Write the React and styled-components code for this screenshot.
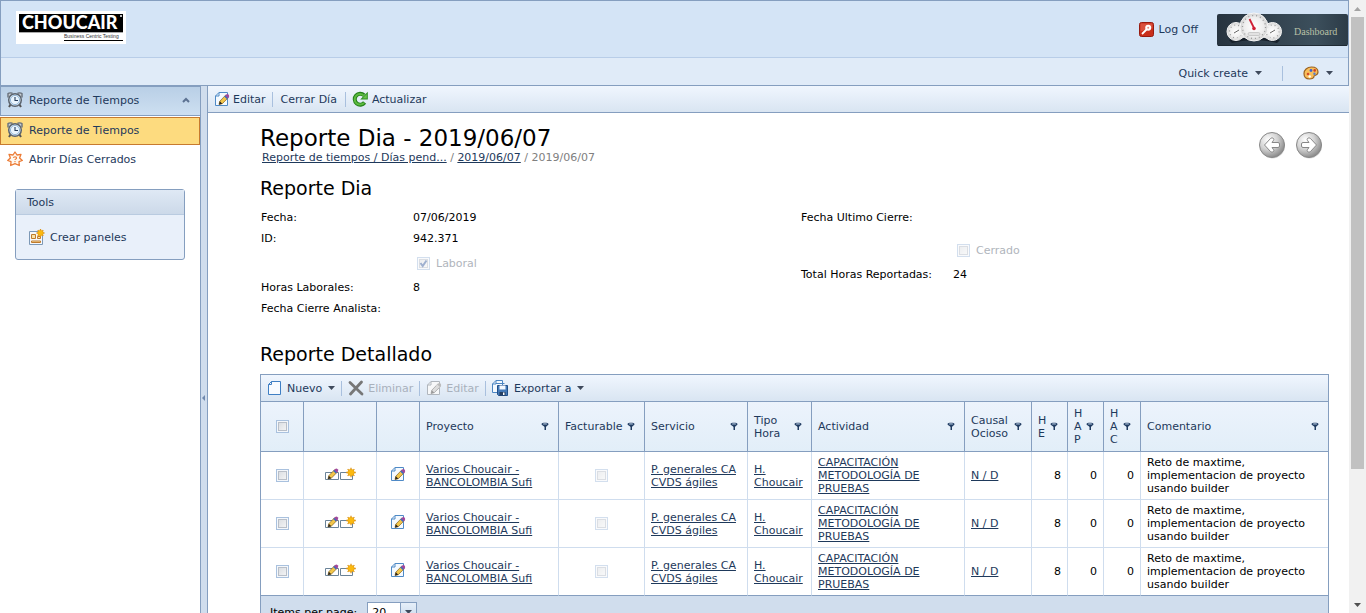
import React from "react";
import styled, { createGlobalStyle, css } from "styled-components";

const line = "#859ebf";
const soft = "#cfddee";
const ink = "#1e395b";

const GlobalStyle = createGlobalStyle`
  * { box-sizing: border-box; }
  body { margin: 0; background: #fff; color: #000; font: 11px/13px "DejaVu Sans", Verdana, sans-serif; }
  button, input, select { font: inherit; color: inherit; }
  h1, h2, p { margin: 0; font-weight: 400; }
  a { color: ${ink}; }
  svg { display: block; flex: none; }
`;

/* ---------- frame ---------- */
const Frame = styled.div`
  display: flex;
  height: 100vh;
`;
const Page = styled.div`
  flex: 1;
  min-width: 0;
  display: flex;
  flex-direction: column;
  overflow-y: auto;
  scrollbar-width: none;
`;
const ScrollRail = styled.div`
  width: 17px;
  flex: none;
  display: flex;
  flex-direction: column;
  align-items: center;
  background: #f1f1f1;
`;
const RailEnd = styled.div`
  height: 17px;
  display: flex;
  align-items: center;
`;
const RailTrack = styled.div`
  flex: 1;
  width: 13px;
`;
const RailThumb = styled.div`
  height: 78%;
  background: #c1c1c1;
`;

/* ---------- header ---------- */
const Header = styled.header`
  flex: none;
  border: 1px solid ${line};
  color: ${ink};
`;
const Brand = styled.div`
  height: 57px;
  display: flex;
  align-items: center;
  justify-content: space-between;
  padding: 0 0 3px 15px;
  background: #d4e4f6;
  border-bottom: 1px solid #b8cde8;
`;
const BrandRight = styled.div`
  display: flex;
  align-items: center;
  gap: 19px;
  padding-top: 3px;
`;
const SubBar = styled.div`
  height: 27px;
  display: flex;
  align-items: center;
  justify-content: flex-end;
  padding: 3px 15px 0 0;
  gap: 20px;
  background: #e0ebf8;
`;
const Bar = styled.span`
  width: 1px;
  height: 15px;
  background: #a9c0de;
`;
const PlainButton = styled.button`
  display: flex;
  align-items: center;
  gap: ${(p) => p.$gap ?? 4}px;
  padding: 0 ${(p) => p.$pad ?? 0}px;
  border: 0;
  background: none;
  color: ${ink};
  white-space: nowrap;
  &:disabled { color: #a9b1bc; }
`;
const Dash = styled.button`
  display: block;
  padding: 0;
  border: 0;
  background: none;
`;

/* ---------- body ---------- */
const Body = styled.div`
  flex: 1 0 auto;
  display: flex;
`;
const Sidebar = styled.aside`
  width: 200px;
  flex: none;
  color: ${ink};
`;
const GroupHead = styled.button`
  display: flex;
  align-items: center;
  gap: 6px;
  width: 100%;
  height: 30px;
  padding: 0 10px 2px 6px;
  border: 1px solid ${line};
  border-right: 0;
  background: linear-gradient(#b9cfe6, #cddff1);
  color: ${ink};
  text-align: left;
  & > span { flex: 1; }
`;
const NavLink = styled.a`
  display: flex;
  align-items: center;
  gap: 6px;
  height: 28px;
  padding: 0 6px;
  border: 1px solid transparent;
  color: ${ink};
  text-decoration: none;
  ${(p) => p.$active && css`
    margin-top: 1px;
    padding-bottom: 2px;
    border-color: #c77a2e;
    background: #fddb7f;
  `}
`;
const Tools = styled.section`
  margin: 16px 15px;
  border: 1px solid ${line};
  border-radius: 3px;
  background: #e9f0fa;
`;
const ToolsHead = styled.h2`
  padding: 6px 11px 5px;
  font-size: 11px;
  line-height: 13px;
  border-bottom: 1px solid #b9cbe0;
  background: linear-gradient(#dfe9f5, #ccd9e9);
`;
const ToolsBody = styled.div`
  padding: 14px 13px;
`;
const Splitter = styled.div`
  width: 8px;
  flex: none;
  padding-top: 50vh;
  border: solid ${line};
  border-width: 0 1px;
  background: #d0dded;
`;
const Main = styled.main`
  flex: 1;
  min-width: 0;
`;
const Toolbar = styled.div`
  display: flex;
  align-items: center;
  gap: 6px;
  height: 27px;
  padding: 0 6px;
  border-bottom: 1px solid ${line};
  background: linear-gradient(#f0f6fe, #d9e5f2);
`;
const Content = styled.div`
  padding: 12px 20px 20px 52px;
`;
const TitleRow = styled.div`
  display: flex;
  justify-content: space-between;
  align-items: center;
`;
const Title = styled.h1`
  font-size: 23px;
  line-height: 26px;
`;
const Crumbs = styled.nav`
  padding-left: 2px;
  line-height: 14px;
  color: #808080;
`;
const Pager = styled.div`
  display: flex;
  gap: 9px;
  padding-right: 6px;
`;
const Section = styled.h2`
  margin: ${(p) => (p.$spaced ? "23px 0 8px" : "11px 0 7px")};
  font-size: 19px;
  line-height: 24px;
`;
const Form = styled.div`
  display: grid;
  grid-template-columns: 1fr 1fr;
  gap: 12px;
  padding-left: 1px;
`;
const Field = styled.div`
  display: flex;
  align-items: center;
  height: 21px;
  margin-bottom: ${(p) => (p.$loose ? 8 : 0)}px;
`;
const FieldLabel = styled.span`
  width: 152px;
  flex: none;
`;
const CheckField = styled.label`
  display: flex;
  align-items: center;
  gap: 6px;
  height: 28px;
  padding-left: 156px;
  color: #b0b5bc;
`;
const Check = styled.input.attrs({ type: "checkbox" })`
  appearance: none;
  width: 13px;
  height: 13px;
  margin: 0;
  flex: none;
  vertical-align: middle;
  border: 1px solid #a9c1de;
  background: linear-gradient(135deg, #dcdfe3, #f2f3f4) content-box, #f4f7fb;
  padding: 2px;
  box-shadow: inset 0 0 0 1px #f4f7fb, inset 0 0 0 2px #b9bfc8;
  opacity: ${(p) => (p.disabled ? 0.5 : 1)};
`;
const CheckSlot = styled.span`
  display: grid;
  & > * { grid-area: 1 / 1; }
  & > svg { z-index: 1; }
`;

/* ---------- grid ---------- */
const GridBox = styled.section`
  border: 1px solid ${line};
`;
const Table = styled.table`
  width: 100%;
  table-layout: fixed;
  border-collapse: separate;
  border-spacing: 0;
`;
const Th = styled.th`
  height: 50px;
  padding: 0 6px;
  font-weight: 400;
  text-align: left;
  color: ${ink};
  border-bottom: 1px solid ${line};
  border-right: 1px solid ${line};
  background: linear-gradient(#ecf3fc, #e2eef8);
  &:last-child { border-right: 0; }
`;
const HeadCell = styled.div`
  display: flex;
  align-items: center;
  justify-content: space-between;
  padding-right: 3px;
  gap: 2px;
  & > span { ${(p) => p.$narrow && "width: 10px; word-break: break-all;"} }
`;
const Td = styled.td`
  height: 48px;
  padding: 4px 6px;
  text-align: ${(p) => p.$align || "left"};
  border-right: 1px solid ${soft};
  border-bottom: 1px solid ${soft};
  &:last-child { border-right: 0; padding-right: 14px; }
  tr:last-child > & { border-bottom-color: ${line}; }
`;
const Icons = styled.div`
  display: flex;
  justify-content: center;
`;
const RowIcons = styled(Icons)`
  padding-bottom: 3px;
`;
const IconButton = styled.button`
  padding: 0;
  border: 0;
  background: none;
`;
const GridFoot = styled.div`
  display: flex;
  align-items: center;
  gap: 10px;
  padding: 6px 9px;
  background: #d0dded;
`;
const SelectBox = styled.span`
  display: inline-grid;
  grid-template-columns: 1fr 16px;
  align-items: center;
  width: 50px;
  height: 20px;
  border: 1px solid ${line};
  background: #fff;
`;
const Select = styled.select`
  grid-area: 1 / 1 / 2 / 3;
  appearance: none;
  height: 18px;
  padding: 0 4px;
  border: 0;
  background: transparent;
  color: #000;
`;
const SelectArrow = styled.span`
  grid-area: 1 / 2;
  height: 18px;
  display: grid;
  place-items: center;
  border-left: 1px solid ${line};
  background: linear-gradient(#e6eff9, #c6d7ea);
  pointer-events: none;
`;

/* ---------- icons ---------- */
const Arrow = ({ color = "#3f4a5c" }) => (
  <svg width="7" height="4" viewBox="0 0 7 4"><path d="M0 0h7L3.5 4z" fill={color} /></svg>
);
const RailArrow = ({ up }) => (
  <svg width="7" height="4" viewBox="0 0 7 4">
    <path d={up ? "M0 4h7L3.5 0z" : "M0 0h7L3.5 4z"} fill={up ? "#a3a3a3" : "#505050"} />
  </svg>
);
const Chevron = () => (
  <svg width="8" height="6" viewBox="0 0 8 6"><path d="M1 5l3-3 3 3" fill="none" stroke="#5c7292" strokeWidth="2" /></svg>
);
const Pin = () => (
  <svg width="8" height="10" viewBox="0 0 8 10">
    <path d="M.5 2C.5 .3 7.500 .3 7.500 2 7.500 3.500 5.500 3.700 5 5V8H3.500V5C3 3.700 .5 3.500 .5 2z" fill="#1f3a60" />
    <ellipse cx="4" cy="1.900" rx="2.300" ry=".7" fill="#a8bdd6" />
  </svg>
);
const Clock = () => (
  <svg width="16" height="16" viewBox="0 0 16 16">
    <path d="M3.500 12.500l-1.500 2.500M12.500 12.500l1.500 2.500" stroke="#555" strokeWidth="2" />
    <path d="M1 5.500V1.500Q2.500 .5 5.500 1.200M15 5.500V1.500Q13.500 .5 10.500 1.200" fill="#c9cfd5" stroke="#68707a" strokeWidth="1.400" />
    <circle cx="8" cy="8" r="6.300" fill="#dcebf7" stroke="#5b636d" strokeWidth="1.500" />
    <circle cx="8" cy="8" r="4.600" fill="#e9f4fd" stroke="#92b5d6" />
    <path d="M8 5v3.500h3" fill="none" stroke="#263c59" strokeWidth="1.100" />
  </svg>
);
const Gear = () => (
  <svg width="16" height="16" viewBox="0 0 16 16">
    <path d="M8 1L10 4L14 3.300L12.600 7L15.300 9.500L12 10.700L12.300 14.500L8 12.700L3.700 14.500L4 10.700L.7 9.500L3.400 7L2 3.300L6 4z" fill="#fff8f0" stroke="#ec7b35" strokeWidth="1.300" strokeLinejoin="round" />
    <path d="M6.400 6.900q.2-1.200 1.700-1.200 1.500.1 1.500 1.200 0 .8-.9 1.200-.7.400-.7 1M8 10v1.200" fill="none" stroke="#ec7b35" strokeWidth="1.100" />
  </svg>
);
const Pencil = ({ gray }) => (
  <g>
    <path d="M5 13.500l.8-3.300 5.800-6 2.600 2.500-5.900 6z" fill={gray ? "#ddd" : "#f3c64a"} stroke={gray ? "#999" : "#80601c"} strokeWidth=".7" />
    <path d="M5 13.500l.8-3.300 2.500 2.500z" fill={gray ? "#999" : "#2b2520"} />
    <path d="M10.600 5.200l1.600-1.700q1.400-.9 2.500.3 1 1.300.1 2.400l-1.600 1.600z" fill={gray ? "#bbb" : "#a0489c"} />
    <path d="M10.200 5.600l1-1 2.600 2.500-1 1z" fill={gray ? "#ddd" : "#3a6fc0"} />
  </g>
);
const EditIcon = ({ gray }) => (
  <svg width="16" height="16" viewBox="0 0 16 16">
    <path d="M5 1.500h8.500v13h-12V5z" fill={gray ? "#f7f8f9" : "#f5faff"} stroke={gray ? "#b0b6bd" : "#4f8ac6"} />
    <path d="M5 1.500V5H1.500" fill="none" stroke={gray ? "#b0b6bd" : "#4f8ac6"} />
    <Pencil gray={gray} />
  </svg>
);
const InlineEdit = () => (
  <svg width="15" height="15" viewBox="0 0 15 15">
    <path d="M.5 5.500h13v7h-13z" fill="#fff" stroke="#6b8398" />
    <g transform="translate(-2 -1.500)"><Pencil /></g>
  </svg>
);
const Burst = ({ x, y, r = 4.5 }) => (
  <g transform={`translate(${x} ${y})`}>
    <path d={`M0 ${-r}V${r}M${-r} 0H${r}M${-r * 0.7} ${-r * 0.7}L${r * 0.7} ${r * 0.7}M${r * 0.7} ${-r * 0.7}L${-r * 0.7} ${r * 0.7}`} stroke="#dc941b" strokeWidth="1.300" />
    <circle r={r * 0.66} fill="#fbb90f" stroke="#e6a013" strokeWidth=".6" />
  </g>
);
const InlineNew = () => (
  <svg width="16" height="15" viewBox="0 0 16 15">
    <path d="M.5 5.500h12v7H.5z" fill="#fff" stroke="#6b8398" />
    <Burst x={11} y={5.5} r={4.8} />
  </svg>
);
const PanelIcon = () => (
  <svg width="16" height="16" viewBox="0 0 16 16">
    <path d="M.5 2.500h13v13H.5z" fill="#f6f8fb" stroke="#7c98b6" />
    <path d="M2.500 5.500h4v4h-4zM8.500 7.500h3v2h-3zM2.500 12h9v1.500h-9z" fill="#fae3a6" stroke="#bf7a2c" />
    <Burst x={11.5} y={4} r={4} />
  </svg>
);
const Refresh = () => (
  <svg width="16" height="16" viewBox="0 0 16 16">
    <path d="M12.600 11.600A5.500 5.500 0 1 1 12 4.200" fill="none" stroke="#25811b" strokeWidth="4" />
    <path d="M15.800.8v7.700H8.200z" fill="#2c8d20" />
    <path d="M12 11.800A5.300 5.300 0 1 1 11.800 4.600" fill="none" stroke="#5dbb3f" strokeWidth="2" />
    <path d="M14.800 3v4.500h-4.400z" fill="#69c44a" />
  </svg>
);
const NewIcon = () => (
  <svg width="14" height="16" viewBox="0 0 14 16">
    <path d="M4.500 1.500h9v13H1.500V4.500z" fill="#f8fbff" stroke="#3f7fc4" />
    <path d="M4.500 1.500v3h-3" fill="none" stroke="#3f7fc4" />
  </svg>
);
const DeleteIcon = () => (
  <svg width="16" height="16" viewBox="0 0 16 16">
    <path d="M2 2.500l12 11.500M13.500 2L2.500 14" stroke="#777" strokeWidth="2.800" strokeLinecap="round" />
  </svg>
);
const ExportIcon = () => (
  <svg width="16" height="16" viewBox="0 0 16 16">
    <path d="M4 .5h6.500v12h-10V4z" fill="#f5faff" stroke="#4d86c2" />
    <path d="M4 .5V4H.5M4 3.500h8.500" fill="none" stroke="#4d86c2" />
    <path d="M5.500 5.500h10v10H6.500l-1-1z" fill="#4379b8" stroke="#204f89" />
    <path d="M7.500 5.500h6v4h-6z" fill="#f4f9ff" />
    <path d="M7.500 12h6v3.500h-6z" fill="#263f61" /><path d="M11 12.500h1.500v2.500H11z" fill="#fff" />
  </svg>
);
const KeyIcon = () => (
  <svg width="15" height="15" viewBox="0 0 15 15">
    <rect x=".5" y=".5" width="14" height="14" rx="2" fill="#c92f1b" stroke="#971b10" />
    <path d="M1.500 1.500h12v5q-6 0-12 3z" fill="#e0604d" opacity=".7" />
    <path d="M3 12l4.500-4.500" stroke="#fff" strokeWidth="1.800" />
    <circle cx="9.200" cy="5.700" r="2" fill="#e88d80" stroke="#fff" strokeWidth="2" />
  </svg>
);
const Palette = () => (
  <svg width="16" height="14" viewBox="0 0 16 14">
    <path d="M8.500 1C13 1 15 3.500 15 6c0 3.500-3.500 3.200-4 4 .3 2-2 3-4.500 3C3 13 1 11 1 7.500S4 1 8.500 1z" fill="#f9bf5a" stroke="#9c6322" strokeWidth="1.200" />
    <circle cx="8" cy="4.500" r="1.400" fill="#3c64cf" /><circle cx="11.700" cy="4.400" r="1.300" fill="#cf3c29" />
    <circle cx="5" cy="8" r="1.300" fill="#d24b2d" /><circle cx="11.400" cy="7.700" r="1.200" fill="#5580cf" />
    <circle cx="6.700" cy="10.500" r="1.200" fill="#fff" />
  </svg>
);
const Logo = () => (
  <svg width="110" height="33" viewBox="0 0 110 33" role="img" aria-label="Choucair">
    <path d="M0 0h110v33H0z" fill="#fff" />
    <path d="M3 3h104v18H3z" fill="#000" />
    <path d="M3 21h104v1H3z" fill="#aaa" />
    <text x="6" y="18" fill="#fff" fontFamily="Lato, sans-serif" fontWeight="900" fontSize="18">CHOUCAIR</text>
    <circle cx="105" cy="5" r="1" fill="#fff" />
    <text x="48" y="27" fill="#333" fontFamily="Liberation Sans, sans-serif" fontSize="5">Business Centric Testing</text>
    <path d="M48 29h59v1H48z" fill="#000" />
  </svg>
);
const Dial = ({ x, y, r, children }) => (
  <g>
    <circle cx={x} cy={y} r={r} fill="url(#dial)" stroke="#f7f7f7" strokeWidth="1" />
    <circle cx={x} cy={y} r={r - 2.5} fill="none" stroke="#9a9a9a" strokeWidth="1.200" strokeDasharray="1 3" />
    {children}
  </g>
);
const DashboardArt = () => (
  <svg width="131" height="36" viewBox="0 0 131 36">
    <defs>
      <linearGradient id="slab"><stop offset="0" stopColor="#27333f" /><stop offset=".75" stopColor="#3c4f5c" /><stop offset="1" stopColor="#2c3b47" /></linearGradient>
      <radialGradient id="dial"><stop offset="0" stopColor="#fff" /><stop offset=".7" stopColor="#eee" /><stop offset="1" stopColor="#cfcfcf" /></radialGradient>
    </defs>
    <rect x="0" y="3" width="131" height="32" rx="2" fill="url(#slab)" />
    <path d="M1 34.500h129" stroke="#1f2a34" />
    <path d="M12 29q25-9 51 0l-3 3q-22-6-45 0z" fill="#17202a" />
    <Dial x={19} y={20.5} r={9}><path d="M17 22l5-3" stroke="#666" /></Dial>
    <Dial x={55.5} y={20.5} r={9}><path d="M53 22l5-3" stroke="#666" /></Dial>
    <path d="M22 25q15-6 30 0l3 4q-18-7-36 0z" fill="#e4e4e4" />
    <Dial x={37} y={16} r={14}>
      <path d="M32.500 8l4.500 9" stroke="#cf2036" strokeWidth="1.800" />
      <circle cx="37" cy="17.500" r="1.800" fill="#cf2036" />
      <rect x="31" y="21.500" width="12" height="3" rx="1.500" fill="#e2e2e2" stroke="#bbb" strokeWidth=".7" />
    </Dial>
    <text x="77" y="24" fill="#b9c1a6" fontFamily="Liberation Serif, serif" fontSize="10">Dashboard</text>
  </svg>
);
const RoundArrow = ({ right }) => (
  <svg width="28" height="28" viewBox="0 0 28 28">
    <defs>
      <radialGradient id="ball" cx=".35" cy=".3" r=".75"><stop offset="0" stopColor="#fff" /><stop offset=".5" stopColor="#d2d2d2" /><stop offset="1" stopColor="#858585" /></radialGradient>
    </defs>
    <circle cx="14.500" cy="15" r="12.500" fill="#ddd" />
    <circle cx="14" cy="14" r="12.500" fill="url(#ball)" stroke="#888" />
    <path transform={right ? "translate(28 0) scale(-1 1)" : undefined} d="M6.500 14l6-6.500q1.500-1.500 3 0 .8 1-.2 2.200L14 11.500h6q1.500 0 1.500 1.500v2q0 1.500-1.500 1.500h-6l1.300 1.800q1 1.200.2 2.200-1.500 1.500-3 0z" fill="#fff" stroke="#888" strokeLinejoin="round" />
  </svg>
);
const CheckMark = () => (
  <svg width="13" height="13" viewBox="0 0 13 13"><path d="M3.500 6l2.200 3L9.500 3.500" fill="none" stroke="#9fb0cf" strokeWidth="2" /></svg>
);
const Collapse = () => (
  <svg width="6" height="10" viewBox="0 0 6 10"><path d="M4 2v6L1 5z" fill="#7189ad" /></svg>
);

/* ---------- data ---------- */
const columns = [
  { label: "Proyecto", width: 139 },
  { label: "Facturable", width: 86 },
  { label: "Servicio", width: 103 },
  { label: "Tipo Hora", width: 64 },
  { label: "Actividad", width: 153 },
  { label: "Causal Ocioso", width: 67 },
  { label: "HE", width: 36, narrow: true },
  { label: "HAP", width: 36, narrow: true },
  { label: "HAC", width: 37, narrow: true },
  { label: "Comentario" },
];
const entry = {
  project: "Varios Choucair - BANCOLOMBIA Sufi",
  service: "P. generales CA CVDS ágiles",
  hourType: "H. Choucair",
  activity: "CAPACITACIÓN METODOLOGÍA DE PRUEBAS",
  idle: "N / D",
  hours: [8, 0, 0],
  comment: "Reto de maxtime, implementacion de proyecto usando builder",
};
const rows = [1, 2, 3].map((id) => ({ id, ...entry }));

const Row = ({ row }) => (
  <tr>
    <Td $align="center"><Check aria-label="Seleccionar fila" /></Td>
    <Td>
      <RowIcons>
        <IconButton aria-label="Editar en línea"><InlineEdit /></IconButton>
        <IconButton aria-label="Nuevo en línea"><InlineNew /></IconButton>
      </RowIcons>
    </Td>
    <Td><RowIcons><IconButton aria-label="Editar"><EditIcon /></IconButton></RowIcons></Td>
    <Td><a href="#proyecto">{row.project}</a></Td>
    <Td $align="center"><Check disabled aria-label="Facturable" /></Td>
    <Td><a href="#servicio">{row.service}</a></Td>
    <Td><a href="#hora">{row.hourType}</a></Td>
    <Td><a href="#actividad">{row.activity}</a></Td>
    <Td><a href="#causal">{row.idle}</a></Td>
    {row.hours.map((h, i) => <Td key={i} $align="right">{h}</Td>)}
    <Td>{row.comment}</Td>
  </tr>
);

const Detail = () => (
  <GridBox>
    <Toolbar>
      <PlainButton $gap={6}><NewIcon />Nuevo<Arrow /></PlainButton>
      <Bar />
      <PlainButton disabled><DeleteIcon />Eliminar</PlainButton>
      <Bar />
      <PlainButton disabled><EditIcon gray />Editar</PlainButton>
      <Bar />
      <PlainButton $gap={6}><ExportIcon />Exportar a<Arrow /></PlainButton>
    </Toolbar>
    <Table>
      <colgroup>
        <col width="43" /><col width="73" /><col width="43" />
        {columns.map((c) => <col key={c.label} width={c.width} />)}
      </colgroup>
      <thead>
        <tr>
          <Th><Icons><Check aria-label="Seleccionar todo" /></Icons></Th>
          <Th /><Th />
          {columns.map((c) => (
            <Th key={c.label}>
              <HeadCell $narrow={c.narrow}><span>{c.label}</span><Pin /></HeadCell>
            </Th>
          ))}
        </tr>
      </thead>
      <tbody>{rows.map((r) => <Row key={r.id} row={r} />)}</tbody>
    </Table>
    <GridFoot>
      <label htmlFor="page-size">Items per page:</label>
      <SelectBox>
        <Select id="page-size" defaultValue="20"><option>10</option><option>20</option><option>50</option></Select>
        <SelectArrow><Arrow /></SelectArrow>
      </SelectBox>
    </GridFoot>
  </GridBox>
);

export default function App() {
  return (
    <Frame>
      <GlobalStyle />
      <Page>
        <Header>
          <Brand>
            <Logo />
            <BrandRight>
              <PlainButton $gap={5}><KeyIcon />Log Off</PlainButton>
              <Dash aria-label="Dashboard"><DashboardArt /></Dash>
            </BrandRight>
          </Brand>
          <SubBar>
            <PlainButton $gap={7}>Quick create<Arrow /></PlainButton>
            <Bar />
            <PlainButton $gap={7} aria-label="Tema"><Palette /><Arrow /></PlainButton>
          </SubBar>
        </Header>
        <Body>
          <Sidebar>
            <GroupHead><Clock /><span>Reporte de Tiempos</span><Chevron /></GroupHead>
            <nav>
              <NavLink href="#tiempos" $active><Clock />Reporte de Tiempos</NavLink>
              <NavLink href="#dias"><Gear />Abrir Días Cerrados</NavLink>
            </nav>
            <Tools>
              <ToolsHead>Tools</ToolsHead>
              <ToolsBody><PlainButton $gap={5}><PanelIcon />Crear paneles</PlainButton></ToolsBody>
            </Tools>
          </Sidebar>
          <Splitter><Collapse /></Splitter>
          <Main>
            <Toolbar>
              <PlainButton $gap={3}><EditIcon />Editar</PlainButton>
              <Bar />
              <PlainButton $pad={2}>Cerrar Día</PlainButton>
              <Bar />
              <PlainButton><Refresh />Actualizar</PlainButton>
            </Toolbar>
            <Content>
              <TitleRow>
                <div>
                  <Title>Reporte Dia - 2019/06/07</Title>
                  <Crumbs>
                    <a href="#pendientes">Reporte de tiempos / Días pend...</a> / <a href="#dia">2019/06/07</a> / 2019/06/07
                  </Crumbs>
                </div>
                <Pager>
                  <IconButton aria-label="Anterior"><RoundArrow /></IconButton>
                  <IconButton aria-label="Siguiente"><RoundArrow right /></IconButton>
                </Pager>
              </TitleRow>
              <Section>Reporte Dia</Section>
              <Form>
                <div>
                  <Field><FieldLabel>Fecha:</FieldLabel>07/06/2019</Field>
                  <Field><FieldLabel>ID:</FieldLabel>942.371</Field>
                  <CheckField>
                    <CheckSlot><Check disabled defaultChecked /><CheckMark /></CheckSlot>Laboral
                  </CheckField>
                  <Field><FieldLabel>Horas Laborales:</FieldLabel>8</Field>
                  <Field><FieldLabel>Fecha Cierre Analista:</FieldLabel></Field>
                </div>
                <div>
                  <Field $loose><FieldLabel>Fecha Ultimo Cierre:</FieldLabel></Field>
                  <CheckField><Check disabled />Cerrado</CheckField>
                  <Field><FieldLabel>Total Horas Reportadas:</FieldLabel>24</Field>
                </div>
              </Form>
              <Section $spaced>Reporte Detallado</Section>
              <Detail />
            </Content>
          </Main>
        </Body>
      </Page>
      <ScrollRail aria-hidden="true">
        <RailEnd><RailArrow up /></RailEnd>
        <RailTrack><RailThumb /></RailTrack>
        <RailEnd><RailArrow /></RailEnd>
      </ScrollRail>
    </Frame>
  );
}
